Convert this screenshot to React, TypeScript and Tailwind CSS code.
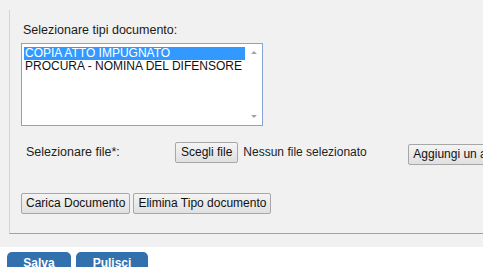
import React from 'react';

const tipi = ['COPIA ATTO IMPUGNATO', 'PROCURA - NOMINA DEL DIFENSORE'];

const GrayButton: React.FC<{ label: string; className?: string }> = ({ label, className = '' }) => (
  <button
    className={`shrink-0 h-[21px] px-[4px] border border-[#a7a7a7] rounded-[2px] bg-gradient-to-b from-[#f4f4f4] to-[#e0e0e0] text-[12px] leading-[19px] text-[#111] whitespace-nowrap ${className}`}
  >
    {label}
  </button>
);

const App: React.FC = () => {
  return (
    <div className="w-[496px] h-[267px] bg-white overflow-hidden font-['Liberation_Sans',Arial,sans-serif] text-[12px] leading-[14px] text-[#222]">
      <div className="w-[483px] bg-[#f1f1f1] pt-[10px] pb-[13px] overflow-hidden">
        <div className="ml-[9px] border-l border-b border-l-[#d4d4d4] border-b-[#a3a3a3] pl-[11px] pt-[13px] pb-[19px]">
          <p className="ml-[2px] text-[12.5px] text-[#1a1a1a]">Selezionare tipi documento:</p>

          {/* listbox */}
          <div className="mt-[6px] w-[242px] h-[83px] border border-[#86a3d4] bg-white flex">
            <div className="flex-1 pt-[3px] pl-[2px]">
              {tipi.map((t, i) => (
                <div
                  key={t}
                  className={`h-[13px] leading-[13px] pl-[1px] whitespace-nowrap ${
                    i === 0 ? 'bg-[#3399ff] text-white' : 'text-[#111]'
                  }`}
                >
                  {t}
                </div>
              ))}
            </div>
            <div className="w-[17px] flex flex-col justify-between items-center py-[7px]">
              <span className="w-0 h-0 border-l-[3px] border-r-[3px] border-b-[3px] border-l-transparent border-r-transparent border-b-[#a3a3a3]" />
              <span className="w-0 h-0 border-l-[3px] border-r-[3px] border-t-[3px] border-l-transparent border-r-transparent border-t-[#a3a3a3]" />
            </div>
          </div>

          {/* file row */}
          <div className="mt-[16px] h-[22px] flex items-start whitespace-nowrap">
            <span className="shrink-0 ml-[5px] mt-[3px] w-[149px] text-[12.5px]">Selezionare file*:</span>
            <GrayButton label="Scegli file" className="h-[20px] leading-[18px] px-[5px]" />
            <span className="shrink-0 ml-[5px] mt-[3px] w-[165px]">Nessun file selezionato</span>
            <GrayButton label="Aggiungi un altro documento" className="mt-[2px] h-[20px] leading-[18px] px-[3px]" />
          </div>

          {/* actions */}
          <div className="mt-[29px] flex gap-[3px]">
            <GrayButton label="Carica Documento" className="px-[3.5px]" />
            <GrayButton label="Elimina Tipo documento" className="px-[3.5px]" />
          </div>
        </div>
      </div>

      <div className="mt-[5px] ml-[7px] flex gap-[5px]">
        <button className="w-[64px] h-[22px] rounded-t-[5px] bg-[#3371ae] text-white font-bold text-[12px] leading-[18px]">
          Salva
        </button>
        <button className="w-[72px] h-[22px] rounded-t-[5px] bg-[#3371ae] text-white font-bold text-[12px] leading-[18px]">
          Pulisci
        </button>
      </div>
    </div>
  );
};

export default App;
